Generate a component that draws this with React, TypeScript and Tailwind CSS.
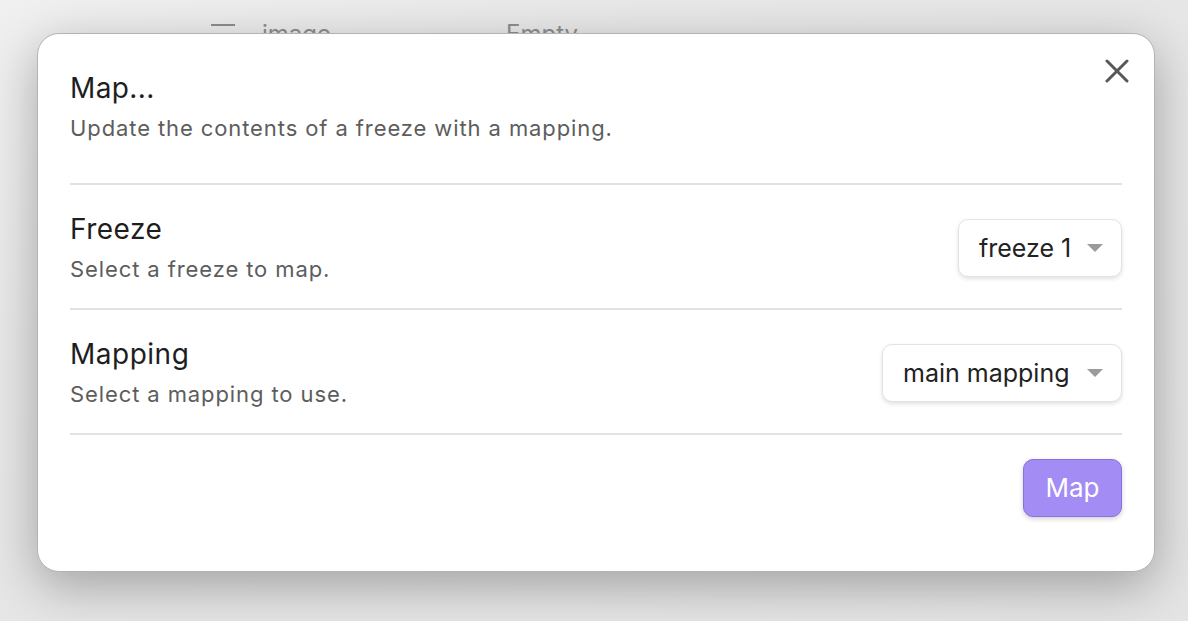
import React from "react";

function Caret() {
  return (
    <svg width="18" height="10" viewBox="0 0 18 10" className="shrink-0">
      <path d="M1 1 L17 1 L9 9 Z" fill="#9b9b9b" />
    </svg>
  );
}

function Select({ value, width }: { value: string; width: string }) {
  return (
    <div
      className={`${width} h-[58px] flex items-center justify-between pl-[20px] pr-[17px] rounded-[10px] bg-white border border-[#e3e3e3] shadow-[0_2px_4px_rgba(0,0,0,0.12)] text-[25px] text-[#222222]`}
    >
      <span className="leading-none">{value}</span>
      <Caret />
    </div>
  );
}

function Row({ label, desc, children }: { label: string; desc: string; children: React.ReactNode }) {
  return (
    <div className="flex items-center justify-between pt-[27px] pb-[24px] border-t-2 border-[#e2e2e2]">
      <div className="flex flex-col">
        <div className="text-[28px] leading-[34px] tracking-[0.5px] text-[#1e1e1e]">{label}</div>
        <div className="mt-[8px] text-[22px] leading-[30px] tracking-[0.9px] text-[#5d5d5d]">{desc}</div>
      </div>
      {children}
    </div>
  );
}

export default function App() {
  return (
    <div className="relative w-[1188px] h-[621px] overflow-hidden bg-[#e7e7e7] font-['Inter',sans-serif]">
      <div className="absolute inset-0 bg-[radial-gradient(ellipse_at_top_left,#f0f0f0_0%,#e8e8e8_40%,#e4e4e4_100%)]" />
      {/* background page */}
      <div className="relative flex items-start pt-[18px] pl-[211px] text-[24px] leading-[32px] text-[#8e8e8e]">
        <div className="mt-[6px] w-[24px] h-[2px] bg-[#8e8e8e]" />
        <span className="ml-[27px]">image</span>
        <span className="ml-[175px]">Empty</span>
      </div>
      {/* modal */}
      <div className="absolute left-[37px] top-[33px] w-[1118px] h-[539px] rounded-[22px] bg-white border border-[#b3b3b3] shadow-[0_14px_50px_rgba(0,0,0,0.3)] px-[32px]">
        <button className="absolute right-[25px] top-[25px] w-[24px] h-[24px] flex items-center justify-center">
          <svg width="24" height="24" viewBox="0 0 24 24">
            <path d="M2 2 L22 22 M22 2 L2 22" stroke="#585858" strokeWidth="3" strokeLinecap="round" />
          </svg>
        </button>
        <div className="pt-[37px] pb-[40px]">
          <div className="text-[28px] leading-[34px] tracking-[0.4px] text-[#1e1e1e]">Map...</div>
          <div className="mt-[8px] text-[22px] leading-[30px] tracking-[0.9px] text-[#5d5d5d]">
            Update the contents of a freeze with a mapping.
          </div>
        </div>
        <Row label="Freeze" desc="Select a freeze to map.">
          <Select value="freeze 1" width="w-[164px]" />
        </Row>
        <Row label="Mapping" desc="Select a mapping to use.">
          <Select value="main mapping" width="w-[240px]" />
        </Row>
        <div className="flex justify-end pt-[24px] border-t-2 border-[#e2e2e2]">
          <button className="w-[99px] h-[58px] rounded-[10px] bg-[#a38cf3] border border-[#8a70de] shadow-[0_2px_5px_rgba(0,0,0,0.18)] text-white text-[26px] leading-none">
            Map
          </button>
        </div>
      </div>
    </div>
  );
}
